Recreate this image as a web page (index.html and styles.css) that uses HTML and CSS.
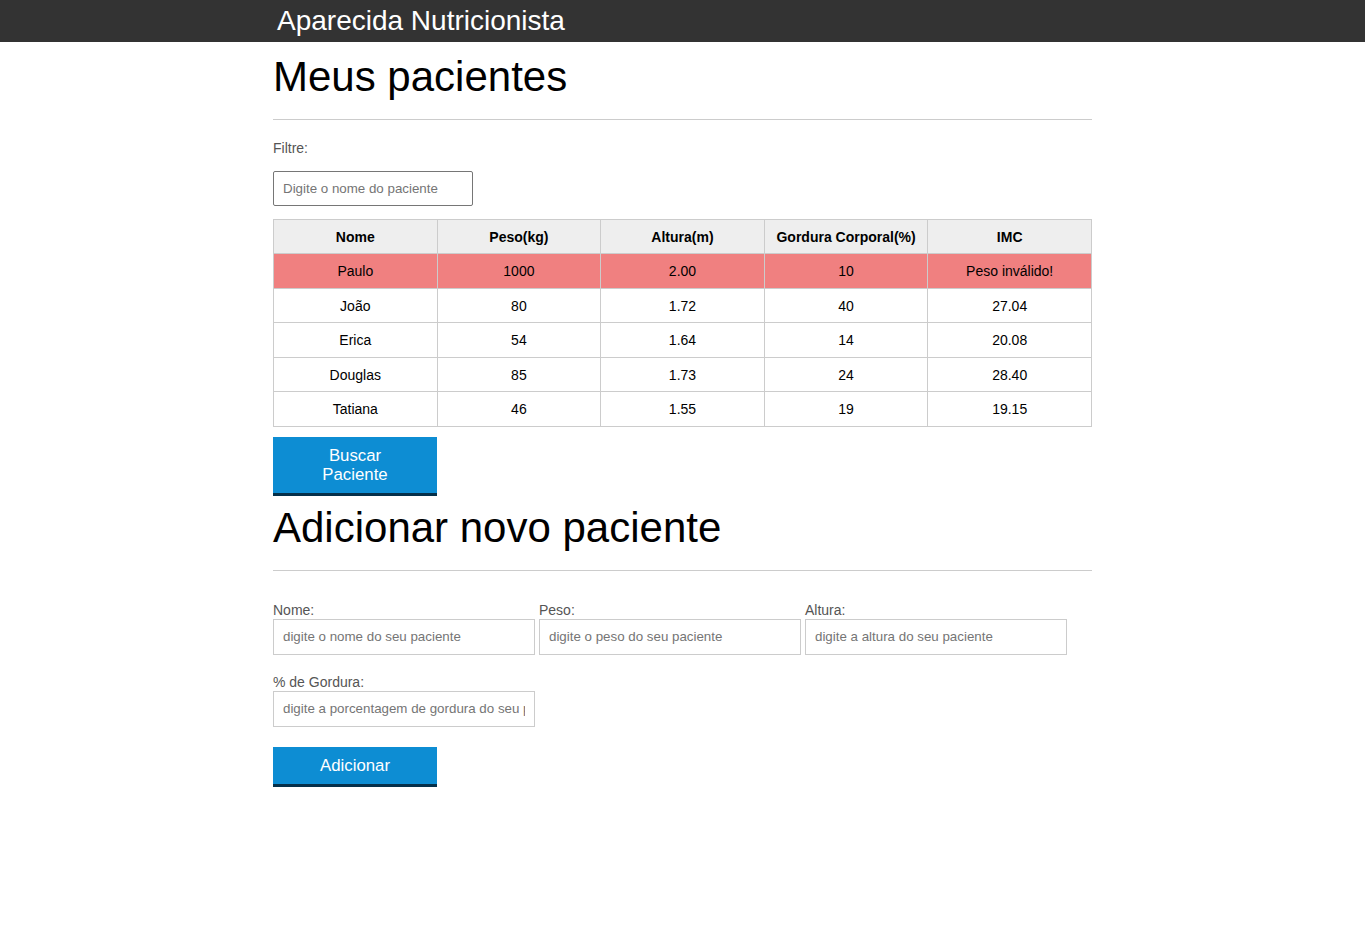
FILE: index.html
```html
<!DOCTYPE html>
<html lang="pt-br">
<head>
<meta charset="UTF-8">
<title>Aparecida Nutrição</title>
<link rel="stylesheet" href="styles.css">
</head>
<body>
<header class="topo">
  <div class="container">
    <h1 class="titulo">Aparecida Nutricionista</h1>
  </div>
</header>
<main class="container">
  <section class="secao">
    <h2 class="titulo-secao primeira">Meus pacientes</h2>
    <hr class="divisor">
    <label class="rotulo-filtro" for="filtrar-tabela">Filtre:</label>
    <input class="campo-filtro" id="filtrar-tabela" type="text" placeholder="Digite o nome do paciente">
    <table class="tabela">
      <thead>
        <tr>
          <th>Nome</th>
          <th>Peso(kg)</th>
          <th>Altura(m)</th>
          <th>Gordura Corporal(%)</th>
          <th>IMC</th>
        </tr>
      </thead>
      <tbody>
        <tr class="paciente-invalido">
          <td>Paulo</td><td>1000</td><td>2.00</td><td>10</td><td>Peso inválido!</td>
        </tr>
        <tr>
          <td>João</td><td>80</td><td>1.72</td><td>40</td><td>27.04</td>
        </tr>
        <tr>
          <td>Erica</td><td>54</td><td>1.64</td><td>14</td><td>20.08</td>
        </tr>
        <tr>
          <td>Douglas</td><td>85</td><td>1.73</td><td>24</td><td>28.40</td>
        </tr>
        <tr>
          <td>Tatiana</td><td>46</td><td>1.55</td><td>19</td><td>19.15</td>
        </tr>
      </tbody>
    </table>
    <button class="botao botao-buscar" type="button">Buscar Paciente</button>
  </section>
  <section class="secao">
    <h2 class="titulo-secao">Adicionar novo paciente</h2>
    <hr class="divisor">
    <form class="formulario">
      <div class="grupo">
        <label for="nome">Nome:</label>
        <input id="nome" class="campo" type="text" placeholder="digite o nome do seu paciente">
      </div>
      <div class="grupo">
        <label for="peso">Peso:</label>
        <input id="peso" class="campo" type="text" placeholder="digite o peso do seu paciente">
      </div>
      <div class="grupo">
        <label for="altura">Altura:</label>
        <input id="altura" class="campo" type="text" placeholder="digite a altura do seu paciente">
      </div>
      <div class="grupo">
        <label for="gordura">% de Gordura:</label>
        <input id="gordura" class="campo" type="text" placeholder="digite a porcentagem de gordura do seu paciente">
      </div>
    </form>
    <button class="botao botao-adicionar" type="button">Adicionar</button>
  </section>
</main>
</body>
</html>
```

FILE: styles.css
```css
* {
  box-sizing: border-box;
}

body {
  margin: 0;
  font-family: "Liberation Sans", Arial, Helvetica, sans-serif;
  color: #000;
  background: #fff;
}

.container {
  width: 819px;
  margin: 0 auto;
}

.topo {
  background-color: #333;
  height: 42px;
}

.titulo {
  margin: 0;
  padding-left: 4px;
  font-size: 28px;
  font-weight: normal;
  line-height: 42px;
  color: #fff;
}

.secao {
  display: flex;
  flex-direction: column;
  align-items: flex-start;
}

.titulo-secao {
  margin: 8px 0 0;
  font-size: 42px;
  font-weight: normal;
  line-height: 48px;
}

.titulo-secao.primeira {
  margin-top: 11px;
}

.divisor {
  align-self: stretch;
  margin: 18px 0 0;
  height: 0;
  border: 0;
  border-top: 1px solid #ccc;
}

.rotulo-filtro {
  margin-top: 20px;
  font-size: 14px;
  line-height: 16px;
  color: #555;
}

.campo-filtro {
  margin-top: 15px;
  width: 200px;
  height: 35px;
  padding: 0 9px;
  border: 1px solid #767676;
  border-radius: 2px;
  font-family: "Liberation Sans", Arial, sans-serif;
  font-size: 13.333px;
  color: #000;
}

.campo-filtro::placeholder,
.campo::placeholder {
  color: #757575;
}

.tabela {
  margin-top: 13px;
  width: 100%;
  border-collapse: collapse;
  table-layout: fixed;
  font-size: 14px;
}

.tabela th,
.tabela td {
  border: 1px solid #ccc;
  padding: 9.6px 4px 8.4px;
  line-height: 15.5px;
  text-align: center;
}

.tabela th {
  background-color: #eee;
  font-weight: bold;
}

.paciente-invalido td {
  background-color: #f08080;
}

.botao {
  width: 164px;
  padding: 9px 25px;
  border: 0;
  border-bottom: 3px solid #05304a;
  background-color: #0d8dd3;
  color: #fff;
  font-family: "Liberation Sans", Arial, sans-serif;
  font-size: 16.8px;
  line-height: 19px;
  text-align: center;
  cursor: pointer;
}

.botao-buscar {
  margin-top: 10px;
}

.botao-adicionar {
  margin-top: 20px;
}

.formulario {
  margin-top: 31px;
  display: grid;
  grid-template-columns: repeat(3, 262px);
  column-gap: 4px;
  row-gap: 19px;
}

.grupo {
  display: flex;
  flex-direction: column;
}

.grupo label {
  font-size: 14px;
  line-height: 16px;
  color: #555;
  margin-bottom: 1px;
}

.campo {
  width: 262px;
  height: 36px;
  padding: 0 9px;
  border: 1px solid #ccc;
  border-radius: 0;
  font-family: "Liberation Sans", Arial, sans-serif;
  font-size: 13.333px;
  color: #000;
}
```
